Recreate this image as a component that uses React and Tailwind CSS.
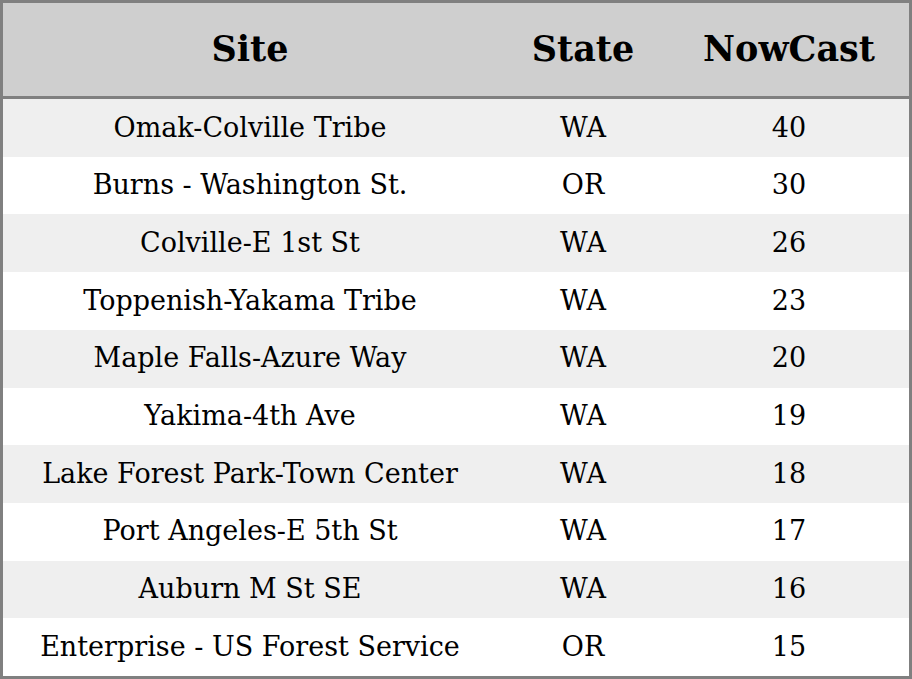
import React from 'react';

const rows = [
  { site: 'Omak-Colville Tribe', state: 'WA', nowcast: 40 },
  { site: 'Burns - Washington St.', state: 'OR', nowcast: 30 },
  { site: 'Colville-E 1st St', state: 'WA', nowcast: 26 },
  { site: 'Toppenish-Yakama Tribe', state: 'WA', nowcast: 23 },
  { site: 'Maple Falls-Azure Way', state: 'WA', nowcast: 20 },
  { site: 'Yakima-4th Ave', state: 'WA', nowcast: 19 },
  { site: 'Lake Forest Park-Town Center', state: 'WA', nowcast: 18 },
  { site: 'Port Angeles-E 5th St', state: 'WA', nowcast: 17 },
  { site: 'Auburn M St SE', state: 'WA', nowcast: 16 },
  { site: 'Enterprise - US Forest Service', state: 'OR', nowcast: 15 },
];

export default function App() {
  return (
    <div className="h-[679px] w-[912px] border-[3px] border-[#808080] bg-white font-['DejaVu_Serif',serif] text-black">
      <div className="grid h-[96px] grid-cols-[494px_172px_1fr] items-center border-b-[3px] border-[#808080] bg-[#cfcfcf] text-center text-[35px] font-bold">
        <div>Site</div>
        <div>State</div>
        <div>NowCast</div>
      </div>
      <div className="grid h-[577px] grid-rows-10">
        {rows.map((row, index) => (
          <div
            key={row.site}
            className={`grid grid-cols-[494px_172px_1fr] items-center text-center text-[27px] ${
              index % 2 === 0 ? 'bg-[#efefef]' : 'bg-white'
            }`}
          >
            <div>{row.site}</div>
            <div>{row.state}</div>
            <div>{row.nowcast}</div>
          </div>
        ))}
      </div>
    </div>
  );
}
